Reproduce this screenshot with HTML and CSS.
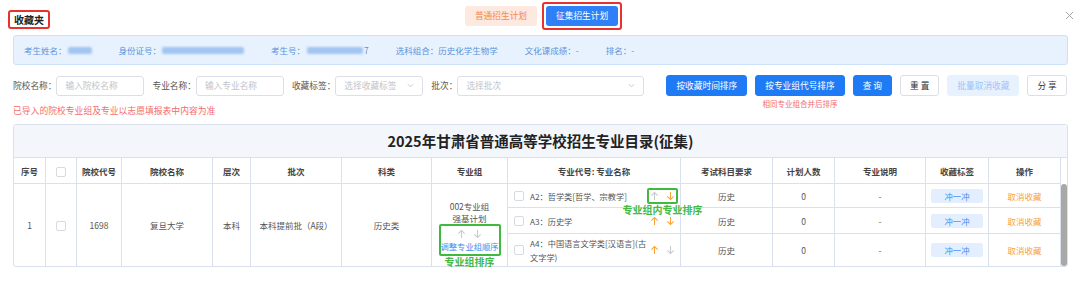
FILE: index.html
```html
<!DOCTYPE html>
<html lang="zh-CN">
<head>
  <meta charset="UTF-8" />
  <title>收藏夹</title>
  <link rel="stylesheet" href="styles.css">
</head>
<body>
  <svg class="sprite" xmlns="http://www.w3.org/2000/svg">
    <symbol id="up" viewBox="0 0 10 10"><path d="M5 9.5V1M1.5 4.5L5 1l3.5 3.5"/></symbol>
    <symbol id="down" viewBox="0 0 10 10"><path d="M5 0.5V9M1.5 5.5L5 9l3.5-3.5"/></symbol>
    <symbol id="chev" viewBox="0 0 8 5"><path d="M1 1l3 3 3-3"/></symbol>
  </svg>

  <div class="page">
    <header class="topbar">
      <div class="top-left"><h1 class="mark-red page-title">收藏夹</h1></div>
      <nav class="tabs">
        <button class="tab tab-plain">普通招生计划</button>
        <span class="mark-red tab-mark"><button class="tab tab-active">征集招生计划</button></span>
      </nav>
      <div class="top-right">
        <svg class="close-icon" viewBox="0 0 10 10"><path d="M1 1L9 9M9 1L1 9"/></svg>
      </div>
    </header>

    <div class="infobar">
      <span class="info-item">考生姓名：<i class="blur blur-name"></i></span>
      <span class="info-item">身份证号：<i class="blur blur-id"></i></span>
      <span class="info-item">考生号：<i class="blur blur-no"></i>7</span>
      <span class="info-item">选科组合：历史化学生物学</span>
      <span class="info-item">文化课成绩：-</span>
      <span class="info-item">排名：-</span>
    </div>

    <form class="filters">
      <div class="field">
        <label>院校名称：</label>
        <div class="input w88">输入院校名称</div>
      </div>
      <div class="field">
        <label>专业名称：</label>
        <div class="input w88">输入专业名称</div>
      </div>
      <div class="field">
        <label>收藏标签：</label>
        <div class="input w88">选择收藏标签<svg class="chev"><use href="#chev"/></svg></div>
      </div>
      <div class="field">
        <label>批次：</label>
        <div class="input w187">选择批次<svg class="chev"><use href="#chev"/></svg></div>
      </div>

      <div class="actions">
        <button type="button" class="btn">按收藏时间排序</button>
        <div class="btn-col">
          <button type="button" class="btn">按专业组代号排序</button>
          <span class="sort-note">相同专业组合并后排序</span>
        </div>
        <button type="button" class="btn">查 询</button>
        <button type="button" class="btn btn-plain">重 置</button>
        <button type="button" class="btn btn-light">批量取消收藏</button>
        <button type="button" class="btn btn-plain">分 享</button>
      </div>
    </form>

    <p class="tip">已导入的院校专业组及专业以志愿填报表中内容为准</p>

    <section class="grid-box">
      <h2 class="grid-title">2025年甘肃省普通高等学校招生专业目录(征集)</h2>
      <div class="grid-body">
        <table class="grid">
          <colgroup>
            <col class="c-idx"><col class="c-cb"><col class="c-code"><col class="c-school">
            <col class="c-level"><col class="c-batch"><col class="c-type"><col class="c-group">
            <col class="c-major"><col class="c-subj"><col class="c-plan"><col class="c-desc">
            <col class="c-tag"><col class="c-op">
          </colgroup>
          <thead>
            <tr>
              <th>序号</th>
              <th><span class="cb"></span></th>
              <th>院校代号</th>
              <th>院校名称</th>
              <th>层次</th>
              <th>批次</th>
              <th>科类</th>
              <th>专业组</th>
              <th>专业代号: 专业名称</th>
              <th>考试科目要求</th>
              <th>计划人数</th>
              <th>专业说明</th>
              <th>收藏标签</th>
              <th>操作</th>
            </tr>
          </thead>
          <tbody>
            <tr class="r1">
              <td rowspan="3" class="span">1</td>
              <td rowspan="3" class="span"><span class="cb"></span></td>
              <td rowspan="3" class="span">1698</td>
              <td rowspan="3" class="span">复旦大学</td>
              <td rowspan="3" class="span">本科</td>
              <td rowspan="3" class="span">本科提前批（A段）</td>
              <td rowspan="3" class="span">历史类</td>
              <td rowspan="3" class="span group-cell">
                <div>002专业组</div>
                <div>强基计划</div>
                <div class="mark-green group-sort">
                  <div class="group-arrows">
                    <svg class="arrow off"><use href="#up"/></svg>
                    <svg class="arrow off"><use href="#down"/></svg>
                  </div>
                  <a class="link">调整专业组顺序</a>
                  <span class="note-green">专业组排序</span>
                </div>
              </td>
              <td class="major">
                <div class="major-in">
                  <span class="cb"></span>
                  <span class="major-name">A2：哲学类[哲学、宗教学]</span>
                  <span class="sorter mark-green">
                    <svg class="arrow off"><use href="#up"/></svg>
                    <svg class="arrow on"><use href="#down"/></svg>
                    <span class="note-green">专业组内专业排序</span>
                  </span>
                </div>
              </td>
              <td>历史</td>
              <td>0</td>
              <td>-</td>
              <td><span class="tag">冲一冲</span></td>
              <td><a class="op">取消收藏</a></td>
            </tr>
            <tr class="r2">
              <td class="major">
                <div class="major-in">
                  <span class="cb"></span>
                  <span class="major-name">A3：历史学</span>
                  <span class="sorter">
                    <svg class="arrow on"><use href="#up"/></svg>
                    <svg class="arrow on"><use href="#down"/></svg>
                  </span>
                </div>
              </td>
              <td>历史</td>
              <td>0</td>
              <td>-</td>
              <td><span class="tag">冲一冲</span></td>
              <td><a class="op">取消收藏</a></td>
            </tr>
            <tr class="r3">
              <td class="major">
                <div class="major-in">
                  <span class="cb"></span>
                  <span class="major-name">A4：中国语言文学类[汉语言](古<br>文字学)</span>
                  <span class="sorter">
                    <svg class="arrow on"><use href="#up"/></svg>
                    <svg class="arrow off"><use href="#down"/></svg>
                  </span>
                </div>
              </td>
              <td>历史</td>
              <td>0</td>
              <td>-</td>
              <td><span class="tag">冲一冲</span></td>
              <td><a class="op">取消收藏</a></td>
            </tr>
          </tbody>
        </table>
        <div class="scroll"><div class="thumb"></div></div>
      </div>
    </section>
  </div>
</body>
</html>
```

FILE: styles.css
```css
* { margin: 0; padding: 0; box-sizing: border-box; }
html, body { width: 1080px; height: 298px; overflow: hidden; background: #fff; }
body {
  font-family: "Noto Sans CJK SC", "Noto Sans", sans-serif;
  font-size: 8.5px; color: #555;
}
.sprite { display: none; }
.page { padding: 0 12px 0 13px; }

/* annotation frames */
.mark-red { border: 2px solid #e8322e; border-radius: 3px; }
.mark-green { border: 2px solid #3fba3f !important; border-radius: 2px; }
.note-green {
  position: absolute; left: 50%; top: calc(100% + 2px);
  transform: translateX(-50%);
  white-space: nowrap; font-size: 10px; font-weight: 700;
  line-height: 12px; color: #45b945;
}

/* top bar */
.topbar {
  display: grid; grid-template-columns: 1fr auto 1fr;
  align-items: center; height: 32px;
}
.top-left { align-self: start; padding-top: 10px; }
.page-title {
  display: inline-block; margin-left: -5px; padding: 1px 4px;
  font-size: 10px; font-weight: 700; line-height: 13px; color: #222;
}
.tabs { display: flex; align-items: center; gap: 5px; margin-left: 6px; }
.tab {
  font: inherit; font-size: 8.7px; height: 20px; line-height: 20px;
  padding: 0 10px; border: none; border-radius: 3px;
}
.tab-plain { background: #fde9df; color: #f5894e; }
.tab-mark { display: inline-flex; padding: 2px; }
.tab-active { background: #2f80f7; color: #fff; }
.top-right { display: flex; justify-content: flex-end; }
.close-icon {
  width: 9px; height: 9px; margin-right: -6px; margin-top: -2px;
  fill: none; stroke: #9a9a9a; stroke-width: 1;
}

/* student info */
.infobar {
  margin-top: 3px; height: 30px; padding-left: 10px;
  display: flex; align-items: center; gap: 27px;
  background: #e7f2fe; border: 1px solid #cce2fb; border-radius: 3px;
  color: #5a92dc;
}
.info-item { display: flex; align-items: center; white-space: nowrap; }
.blur {
  display: inline-block; height: 7px; border-radius: 2px;
  background: #a3c5f2; filter: blur(1px);
}
.blur-name { width: 24px; margin-left: 1px; }
.blur-id { width: 82px; margin-left: 1px; }
.blur-no { width: 56px; margin-left: 2px; margin-right: 1px; }

/* filters */
.filters { display: flex; align-items: flex-start; margin-top: 10px; font-size: 8.7px; }
.field { display: flex; align-items: center; height: 21px; margin-right: 8px; }
.field label { color: #555; white-space: nowrap; }
.input {
  height: 20px; padding: 0 8px;
  display: flex; align-items: center; justify-content: space-between;
  border: 1px solid #dcdfe6; border-radius: 3px; color: #c0c4cc;
}
.w88 { width: 88px; }
.w187 { width: 187px; }
.chev { width: 7px; height: 5px; fill: none; stroke: #c0c4cc; stroke-width: 1; }

.actions { display: flex; align-items: flex-start; gap: 8px; margin-left: 14px; }
.btn-col { display: flex; flex-direction: column; align-items: center; }
.btn {
  font: inherit; height: 21px; padding: 0 9px; white-space: nowrap;
  border: 1px solid #1f7bf5; border-radius: 3px;
  background: #1f7bf5; color: #fff;
}
.btn-plain { background: #fff; border-color: #dcdfe6; color: #333; }
.btn-light { background: #e8f2ff; border-color: #e8f2ff; color: #9fc4f6; }
.sort-note {
  margin-top: 3px; font-size: 7.5px; line-height: 9px;
  color: #f56c6c; white-space: nowrap;
}
.tip { margin-top: -3px; font-size: 8.8px; line-height: 12px; color: #f56c6c; }

/* table */
.grid-box { margin-top: 7px; border: 1px solid #dbe1ec; border-radius: 3px; }
.grid-title {
  height: 33px; line-height: 32px; text-align: center;
  background: #f3f6fb; border-bottom: 1px solid #dbe1ec;
  border-radius: 3px 3px 0 0;
  font-size: 14.5px; font-weight: 700; color: #222;
}
.grid-body { display: flex; }
.grid { width: 1047px; table-layout: fixed; border-collapse: separate; border-spacing: 0; }
.grid th, .grid td {
  border-right: 1px solid #dbe1ec; border-bottom: 1px solid #dbe1ec;
  text-align: center; vertical-align: middle; padding: 0 2px;
  white-space: nowrap;
}
.grid th { font-weight: 700; color: #444; }
.grid thead tr { height: 26px; }
.grid tr.r1 { height: 24px; }
.grid tr.r2 { height: 26px; }
.grid tr.r3 { height: 32px; }
.grid tr.r3 td, .grid td.span { border-bottom: none; }

.c-idx { width: 32px; } .c-cb { width: 31px; } .c-code { width: 45px; }
.c-school { width: 91px; } .c-level { width: 38px; } .c-batch { width: 91px; }
.c-type { width: 90px; } .c-group { width: 76px; } .c-major { width: 173px; }
.c-subj { width: 92px; } .c-plan { width: 62px; } .c-desc { width: 91px; }
.c-tag { width: 63px; } .c-op { width: 72px; }

.cb {
  display: inline-block; width: 10px; height: 10px; vertical-align: middle;
  border: 1px solid #d6dae2; border-radius: 2px; background: #fff;
}

.group-cell { padding-top: 6px !important; line-height: 12px; }
.group-sort { position: relative; width: 62px; margin: 0 auto; padding: 1px 0; line-height: 13px; }
.group-arrows { display: flex; justify-content: center; gap: 7px; height: 13px; align-items: center; }
.link { display: block; font-size: 8.3px; color: #3a8ef0; }

.major { text-align: left !important; padding: 0 2px 0 6px !important; }
.major-in { display: flex; align-items: center; }
.major-name {
  flex: 1; min-width: 0; margin-left: 6px;
  font-size: 8.2px; line-height: 14px; white-space: nowrap;
}
.sorter {
  position: relative; display: flex; align-items: center; gap: 7px;
  height: 16px; padding: 0 1px; border: 2px solid transparent; border-radius: 2px;
}
.arrow { width: 9px; height: 10px; fill: none; stroke: currentColor; stroke-width: 1.2; }
.arrow.off { color: #c5c9d0; }
.arrow.on { color: #f7a33a; }

.tag {
  display: inline-block; width: 52px; height: 14px; line-height: 14px;
  font-size: 8.3px; color: #3d8bf2; background: #e3efff; border-radius: 2px;
}
.op { color: #f7a044; }

.scroll { width: 6px; padding-top: 26px; display: flex; }
.thumb { flex: 1; background: #a8a8a8; border-radius: 3px; }
```
